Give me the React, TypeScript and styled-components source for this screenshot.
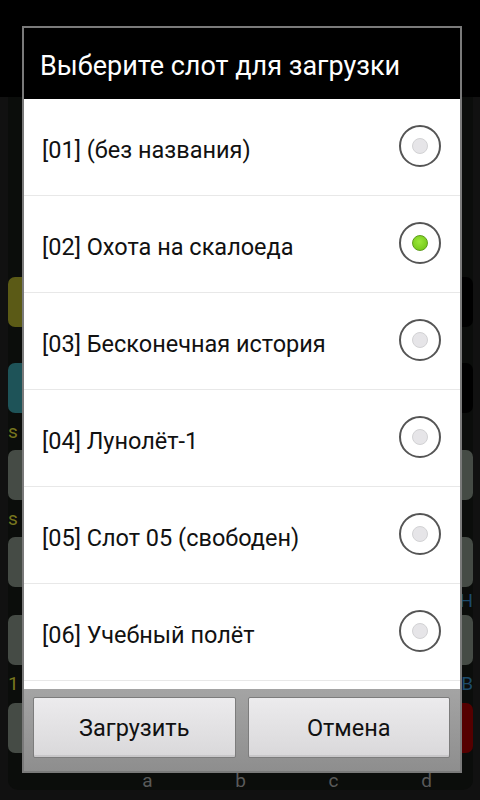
import React from 'react'
import styled, { createGlobalStyle } from 'styled-components'

const GlobalStyle = createGlobalStyle`
  html, body {
    margin: 0;
    padding: 0;
    background: #111111;
    font-family: Roboto, "Noto Sans", "DejaVu Sans", sans-serif;
  }
  #root {
    width: 480px;
    height: 800px;
    position: relative;
    overflow: hidden;
  }
`

const Screen = styled.div`
  width: 480px;
  height: 800px;
  display: flex;
  flex-direction: column;
  background: #111111;
`

const TopBar = styled.div`
  height: 97px;
  flex-shrink: 0;
  background: #000;
`

const Panel = styled.div`
  margin: 0 7px 10px 8px;
  flex: 1;
  min-height: 0;
  background: #0b0d0b;
  border-radius: 0 0 10px 10px;
  display: flex;
  flex-direction: column;
  padding-top: 180px;
`

const KeyRow = styled.div`
  display: grid;
  grid-template-columns: repeat(5, 1fr);
  gap: 12px;
  height: 50px;
  flex-shrink: 0;
`

const Key = styled.div<{ $color: string }>`
  background: ${p => p.$color};
  border-radius: 7px;
`

const Gap = styled.div<{ $h: number }>`
  display: flex;
  align-items: center;
  justify-content: space-between;
  height: ${p => p.$h}px;
  flex-shrink: 0;
  font-size: 19px;
  line-height: 20px;
`

const Label = styled.span<{ $color: string }>`
  color: ${p => p.$color};
`

const Letters = styled.div`
  display: grid;
  grid-template-columns: repeat(5, 1fr);
  margin-top: auto;
  margin-bottom: -2px;
  height: 22px;
  line-height: 22px;
  color: #5a5a5a;
  font-size: 19px;
  text-align: center;
`

const Dialog = styled.div`
  position: absolute;
  left: 22px;
  top: 26px;
  width: 436px;
  height: 743px;
  border: 2px solid #7a7a7a;
  display: flex;
  flex-direction: column;
  background: #999;
`

const Title = styled.div`
  height: 71px;
  flex-shrink: 0;
  background: #000;
  color: #fff;
  font-size: 27px;
  display: flex;
  align-items: center;
  padding-left: 16px;
  padding-top: 4px;
  box-sizing: border-box;
  white-space: nowrap;
`

const List = styled.div`
  height: 590px;
  flex-shrink: 0;
  background: #fff;
  overflow: hidden;
`

const Row = styled.div`
  height: 96px;
  border-bottom: 1px solid #e8e8e8;
  display: flex;
  align-items: center;
  justify-content: space-between;
  padding: 0 19px 0 18px;
  color: #111;
  font-size: 23.5px;
  white-space: nowrap;
`

const SlotName = styled.span`
  margin-top: 5px;
`

const Radio = styled.div`
  width: 38px;
  height: 38px;
  flex-shrink: 0;
  border-radius: 50%;
  border: 2px solid #555;
  display: flex;
  align-items: center;
  justify-content: center;
  margin-bottom: 2px;
`

const Dot = styled.div<{ $on: boolean }>`
  width: 14px;
  height: 14px;
  border-radius: 50%;
  background: ${p => (p.$on ? 'radial-gradient(circle at 45% 40%, #9be83a, #6cc012)' : '#e6e5e8')};
  border: 1px solid ${p => (p.$on ? '#5e9d1c' : '#d2d2d4')};
`

const ButtonBar = styled.div`
  flex: 1;
  background: linear-gradient(#a4a4a4, #8e8e8e);
  display: flex;
  gap: 12px;
  padding: 8px 10px 0 9px;
  box-sizing: border-box;
`

const DialogButton = styled.div`
  flex: 1;
  height: 61px;
  box-sizing: border-box;
  border: 1px solid #7c7c7c;
  border-radius: 2px;
  background: linear-gradient(#ecebed, #d9d8da);
  box-shadow: inset 0 -2px 0 #c8c7c9;
  display: flex;
  align-items: center;
  justify-content: center;
  color: #111;
  font-size: 23.5px;
`

const slots = [
  { name: '[01] (без названия)', on: false },
  { name: '[02] Охота на скалоеда', on: true },
  { name: '[03] Бесконечная история', on: false },
  { name: '[04] Лунолёт-1', on: false },
  { name: '[05] Слот 05 (свободен)', on: false },
  { name: '[06] Учебный полёт', on: false },
]

const keys = (left: string, right: string) =>
  [left, '#444', '#444', '#444', right].map((c, i) => <Key key={i} $color={c} />)

export default function App() {
  return (
    <>
      <GlobalStyle />
      <Screen>
        <TopBar />
        <Panel>
          <KeyRow>{keys('#5b5a16', '#000')}</KeyRow>
          <Gap $h={36} />
          <KeyRow>{keys('#1e5358', '#000')}</KeyRow>
          <Gap $h={37}><Label $color="#77761e">s</Label></Gap>
          <KeyRow>{keys('#454b45', '#454b45')}</KeyRow>
          <Gap $h={37}><Label $color="#77761e">s</Label></Gap>
          <KeyRow>{keys('#454b45', '#454b45')}</KeyRow>
          <Gap $h={28}><span /><Label $color="#1d4a6a">H</Label></Gap>
          <KeyRow>{keys('#454b45', '#454b45')}</KeyRow>
          <Gap $h={38}><Label $color="#77761e">1</Label><Label $color="#1d4a6a">B</Label></Gap>
          <KeyRow>{keys('#454b45', '#550000')}</KeyRow>
          <Letters><span /><span>a</span><span>b</span><span>c</span><span>d</span></Letters>
        </Panel>
      </Screen>
      <Dialog>
        <Title>Выберите слот для загрузки</Title>
        <List>
          {slots.map(s => (
            <Row key={s.name}>
              <SlotName>{s.name}</SlotName>
              <Radio><Dot $on={s.on} /></Radio>
            </Row>
          ))}
          <Row />
        </List>
        <ButtonBar>
          <DialogButton>Загрузить</DialogButton>
          <DialogButton>Отмена</DialogButton>
        </ButtonBar>
      </Dialog>
    </>
  )
}
